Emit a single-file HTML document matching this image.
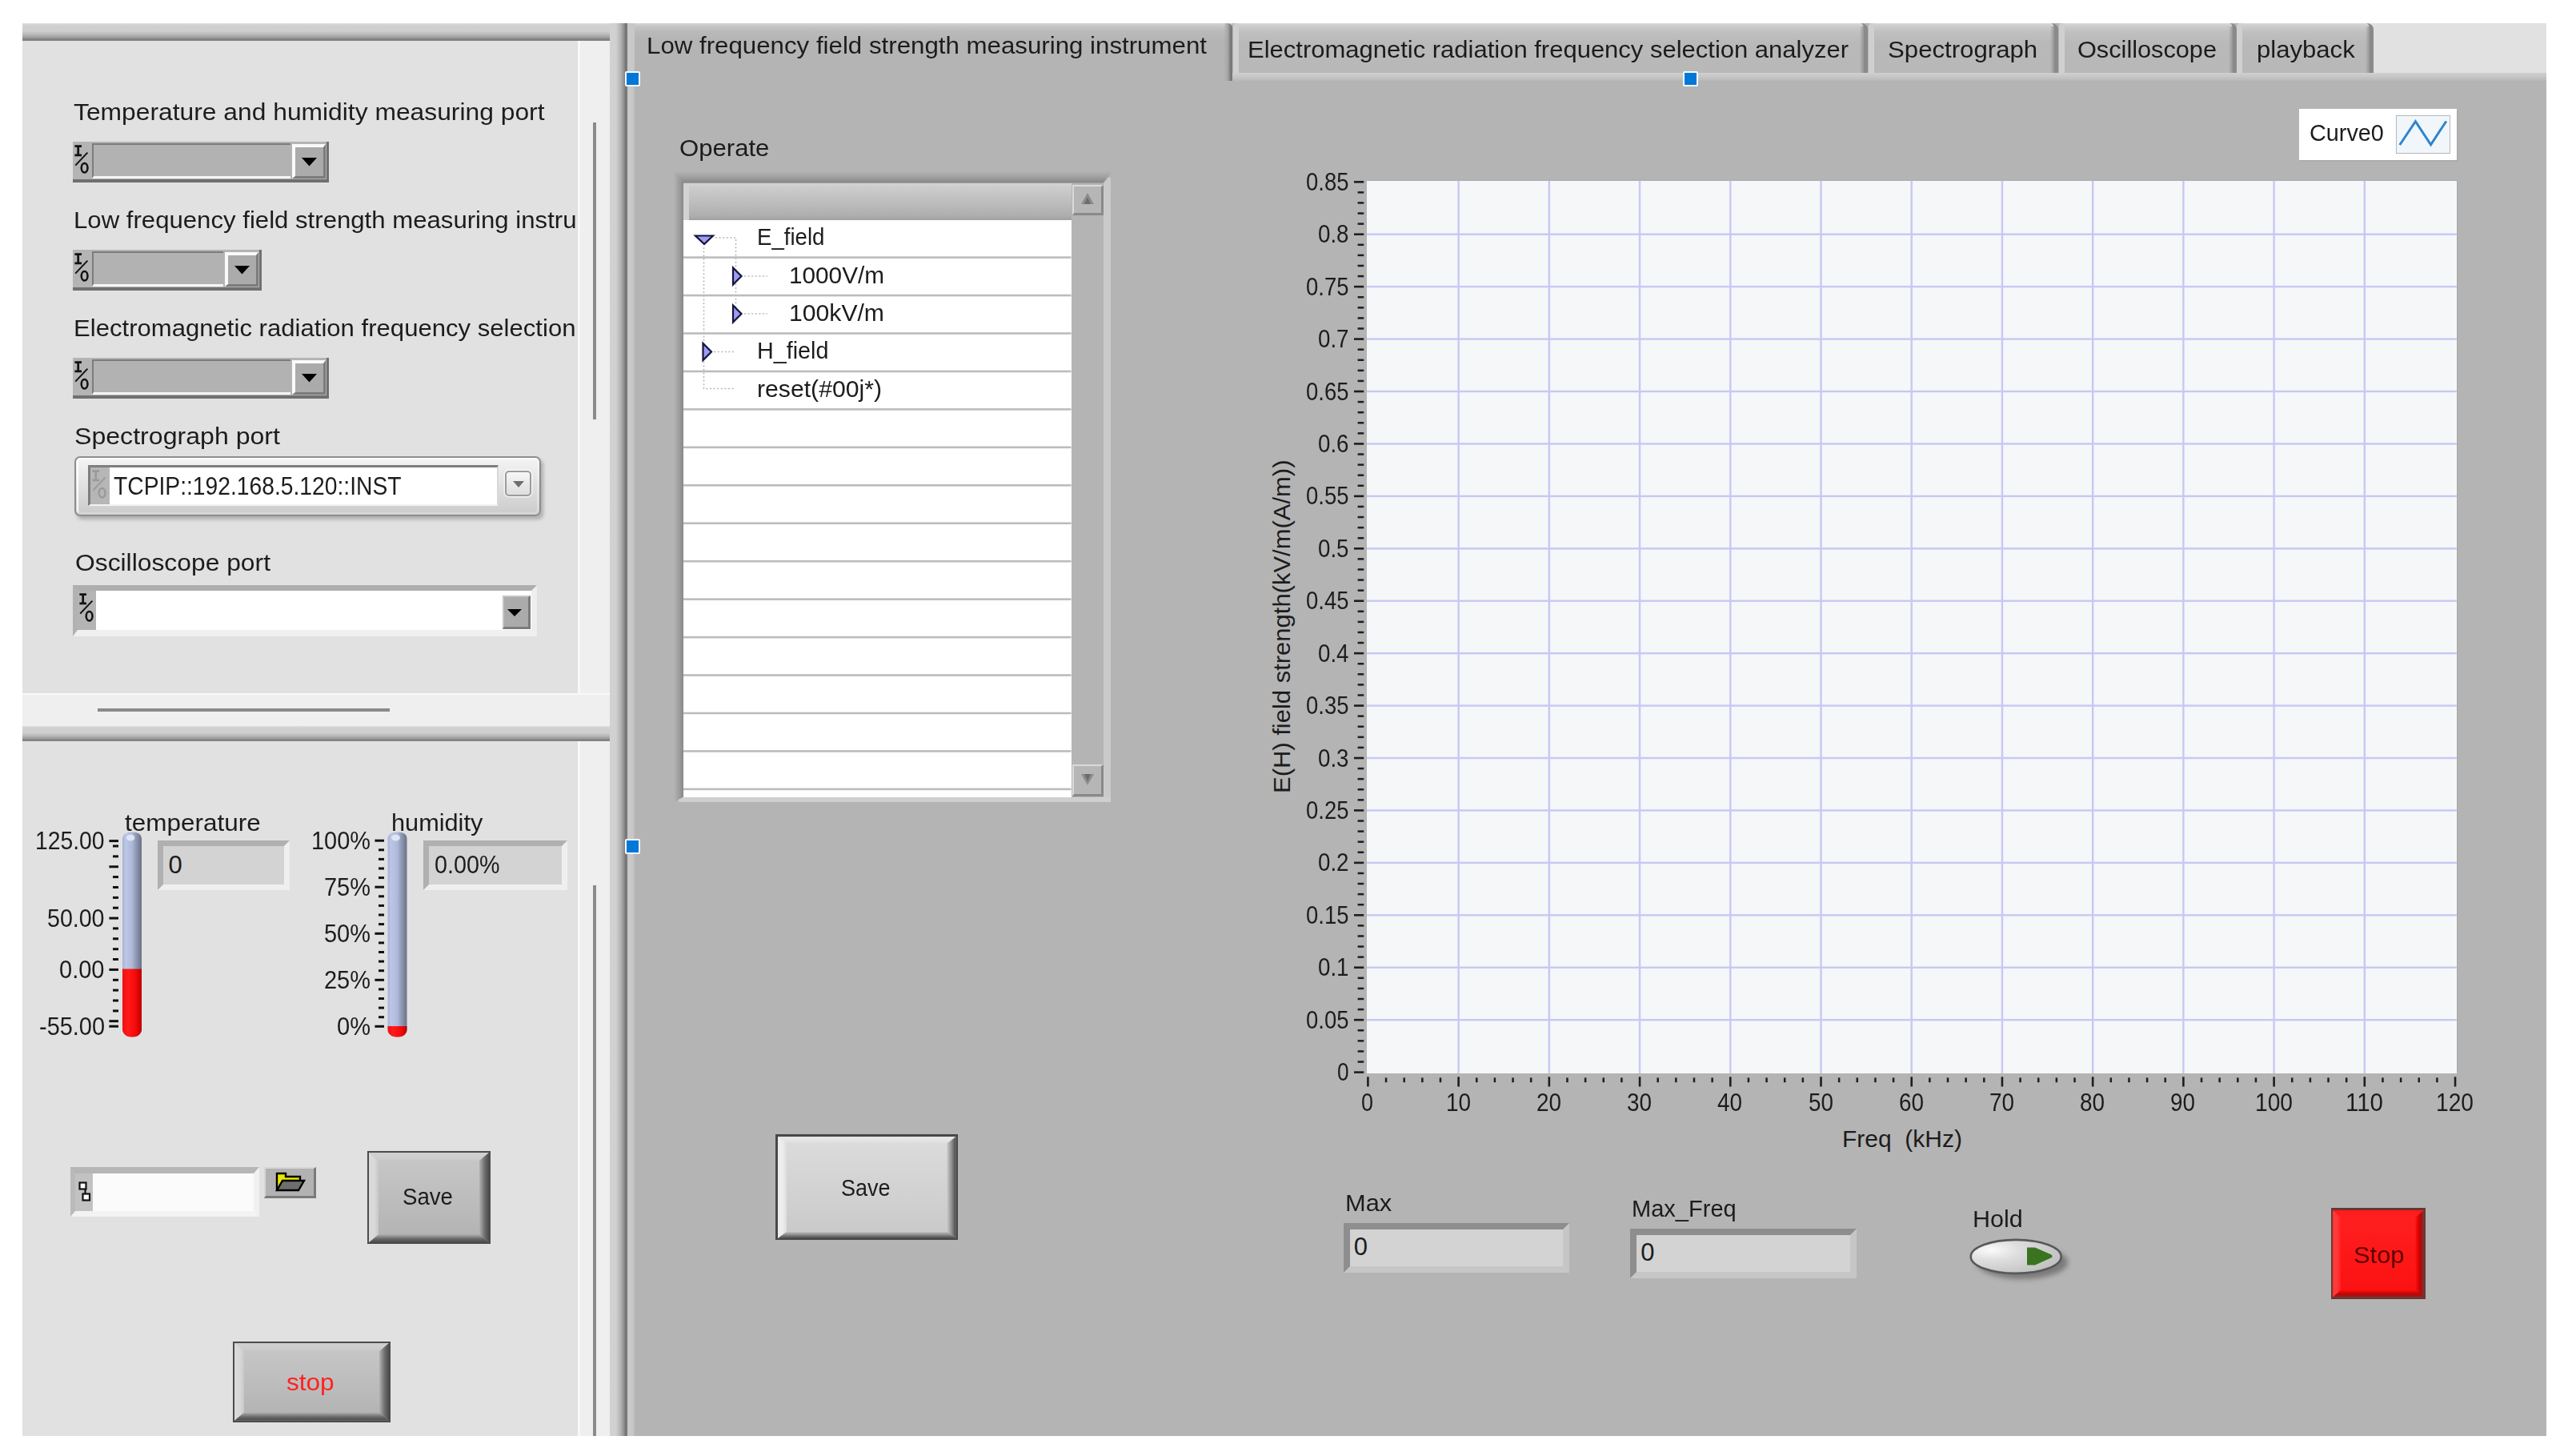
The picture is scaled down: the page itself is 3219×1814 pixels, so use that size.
<!DOCTYPE html>
<html lang="en">
<head>
<meta charset="utf-8">
<title>Field strength measuring front panel</title>
<style>
html,body{margin:0;padding:0;background:#fff;}
body{width:3219px;height:1814px;overflow:hidden;font-family:"Liberation Sans",sans-serif;}
#root{position:relative;width:3219px;height:1814px;overflow:hidden;background:#fff;}
#root div{position:absolute;box-sizing:border-box;}
#root svg{position:absolute;overflow:visible;}
.t{white-space:pre;line-height:1;transform-origin:0 0;}
.clip{overflow:hidden;}

</style>
</head>
<body>
<div id="root">
<div style="left:28px;top:29px;width:694px;height:1764.6px;background:#e1e1e1;"></div>
<div style="left:722px;top:29px;width:40px;height:1764.6px;background:#efefef;border-left:3px solid #f8f8f8;"></div>
<div style="left:28px;top:29px;width:734px;height:22px;background:linear-gradient(#dfdfdf 0,#d1d1d1 12%,#cecece 45%,#b6b6b6 66%,#9c9c9c 82%,#828282 90%,#828282 100%);"></div>
<div style="left:741px;top:153px;width:4px;height:371px;background:#8a8a8a;"></div>
<div style="left:741px;top:1106px;width:4px;height:687.6px;background:#8a8a8a;"></div>
<div style="left:28px;top:866px;width:734px;height:41px;background:#efefef;border-top:2px solid #f8f8f8;"></div>
<div style="left:122px;top:885px;width:365px;height:4px;background:#8a8a8a;"></div>
<div style="left:28px;top:907px;width:734px;height:19px;background:linear-gradient(#dfdfdf 0,#d1d1d1 12%,#cecece 45%,#b6b6b6 66%,#9c9c9c 82%,#828282 90%,#828282 100%);"></div>
<div style="left:762px;top:29px;width:22px;height:1764.6px;background:linear-gradient(90deg,#d2d2d2,#d0d0d0 35%,#b2b2b2 62%,#909090 80%,#787878 88%,#787878);"></div>
<div style="left:784px;top:29px;width:2398px;height:1764.6px;background:#b4b4b4;"></div>
<div style="left:784px;top:29px;width:10px;height:1764.6px;background:linear-gradient(90deg,#c8c8c8,#c8c8c8 65%,#b4b4b4);"></div>
<div class="clip" style="left:28px;top:51px;width:694px;height:815px;">
<div class="t" style="left:63.50px;top:73.80px;font-size:30px;color:#1c1c1c;transform:scaleX(1.0598);">Temperature and humidity measuring port</div>
<div class="t" style="left:63.50px;top:208.80px;font-size:30px;color:#1c1c1c;transform:scaleX(1.0383);">Low frequency field strength measuring instrument</div>
<div class="t" style="left:63.50px;top:343.81px;font-size:30px;color:#1c1c1c;transform:scaleX(1.0366);">Electromagnetic radiation frequency selection analyzer</div>
<div class="t" style="left:65.00px;top:479.11px;font-size:30px;color:#1c1c1c;transform:scaleX(1.0701);">Spectrograph port</div>
<div class="t" style="left:66.00px;top:636.61px;font-size:30px;color:#1c1c1c;transform:scaleX(1.0604);">Oscilloscope port</div>
</div>
<div style="left:91px;top:177px;width:320px;height:51px;background:#b4b4b4;border-right:3px solid #707070;border-bottom:4px solid #707070;"></div>
<svg width="24" height="44" viewBox="0 0 24 44" style="left:91px;top:177px"><g fill="none" stroke="#111"><path d="M2.4 5.6h8.6M6.7 5.6v11.2M2.4 16.8h8.6" stroke-width="2.7"/><path d="M18.4 13.6L3.2 29.6" stroke-width="2"/><ellipse cx="14.6" cy="32.8" rx="3.9" ry="5.7" stroke-width="2.5"/></g></svg>
<div style="left:115px;top:179px;width:248px;height:44px;background:#b2b2b2;border-top:2.5px solid #7c7c7c;border-left:2.5px solid #7c7c7c;border-bottom:3px solid #f4f4f4;"></div>
<div style="left:365px;top:180px;width:42px;height:43px;background:#ababab;border-top:4px solid #fafafa;border-left:4px solid #fafafa;border-right:3px solid #7c7c7c;border-bottom:3px solid #7c7c7c;"></div>
<svg width="20" height="11" viewBox="0 0 20 11" style="left:377px;top:197px"><path d="M0 0h19L9.5 10.5z" fill="#000"/></svg>
<div style="left:91px;top:312px;width:236px;height:51px;background:#b4b4b4;border-right:3px solid #707070;border-bottom:4px solid #707070;"></div>
<svg width="24" height="44" viewBox="0 0 24 44" style="left:91px;top:312px"><g fill="none" stroke="#111"><path d="M2.4 5.6h8.6M6.7 5.6v11.2M2.4 16.8h8.6" stroke-width="2.7"/><path d="M18.4 13.6L3.2 29.6" stroke-width="2"/><ellipse cx="14.6" cy="32.8" rx="3.9" ry="5.7" stroke-width="2.5"/></g></svg>
<div style="left:115px;top:314px;width:164px;height:44px;background:#b2b2b2;border-top:2.5px solid #7c7c7c;border-left:2.5px solid #7c7c7c;border-bottom:3px solid #f4f4f4;"></div>
<div style="left:281px;top:315px;width:42px;height:43px;background:#ababab;border-top:4px solid #fafafa;border-left:4px solid #fafafa;border-right:3px solid #7c7c7c;border-bottom:3px solid #7c7c7c;"></div>
<svg width="20" height="11" viewBox="0 0 20 11" style="left:293px;top:332px"><path d="M0 0h19L9.5 10.5z" fill="#000"/></svg>
<div style="left:91px;top:447px;width:320px;height:51px;background:#b4b4b4;border-right:3px solid #707070;border-bottom:4px solid #707070;"></div>
<svg width="24" height="44" viewBox="0 0 24 44" style="left:91px;top:447px"><g fill="none" stroke="#111"><path d="M2.4 5.6h8.6M6.7 5.6v11.2M2.4 16.8h8.6" stroke-width="2.7"/><path d="M18.4 13.6L3.2 29.6" stroke-width="2"/><ellipse cx="14.6" cy="32.8" rx="3.9" ry="5.7" stroke-width="2.5"/></g></svg>
<div style="left:115px;top:449px;width:248px;height:44px;background:#b2b2b2;border-top:2.5px solid #7c7c7c;border-left:2.5px solid #7c7c7c;border-bottom:3px solid #f4f4f4;"></div>
<div style="left:365px;top:450px;width:42px;height:43px;background:#ababab;border-top:4px solid #fafafa;border-left:4px solid #fafafa;border-right:3px solid #7c7c7c;border-bottom:3px solid #7c7c7c;"></div>
<svg width="20" height="11" viewBox="0 0 20 11" style="left:377px;top:467px"><path d="M0 0h19L9.5 10.5z" fill="#000"/></svg>
<div style="left:93px;top:569.5px;width:583px;height:75px;border-radius:7px;border:2.5px solid #8e8e8e;background:linear-gradient(#f4f4f4,#e2e2e2 45%,#cbcbcb);box-shadow:3px 4px 4px rgba(0,0,0,0.22);"></div>
<div style="left:96px;top:572px;width:577px;height:70px;border-radius:5px;border:2px solid rgba(255,255,255,0.85);border-bottom-color:rgba(255,255,255,0.2);border-right-color:rgba(255,255,255,0.3);"></div>
<div style="left:110px;top:580.5px;width:513px;height:51.5px;background:#fff;border-top:3px solid #7e7e7e;border-left:3px solid #7e7e7e;border-right:2px solid #d8d8d8;border-bottom:2px solid #f2f2f2;"></div>
<div style="left:113px;top:583.5px;width:24px;height:46.5px;background:#b6b6b6;"></div>
<svg width="24" height="44" viewBox="0 0 24 44" style="left:113px;top:583px"><g fill="none" stroke="#9a9a9a"><path d="M2.4 5.6h8.6M6.7 5.6v11.2M2.4 16.8h8.6" stroke-width="2.7"/><path d="M18.4 13.6L3.2 29.6" stroke-width="2"/><ellipse cx="14.6" cy="32.8" rx="3.9" ry="5.7" stroke-width="2.5"/></g></svg>
<div style="left:631px;top:587.5px;width:33px;height:32.5px;border-radius:5px;border:2px solid #9c9c9c;background:linear-gradient(#f6f6f6,#dedede);box-shadow:0 0 0 1.5px rgba(255,255,255,0.7);"></div>
<svg width="14" height="8" viewBox="0 0 14 8" style="left:640.5px;top:600.5px"><path d="M0 0h14L7 8z" fill="#6e6e6e"/></svg>
<div style="left:91px;top:731px;width:580px;height:63.5px;background:#fff;border-top:7px solid #aeaeae;border-left:6px solid #b2b2b2;border-right:7px solid #eeeeee;border-bottom:8px solid #f0f0f0;"></div>
<div style="left:97px;top:738px;width:23px;height:48.5px;background:#b4b4b4;"></div>
<svg width="24" height="44" viewBox="0 0 24 44" style="left:97px;top:737px"><g fill="none" stroke="#111"><path d="M2.4 5.6h8.6M6.7 5.6v11.2M2.4 16.8h8.6" stroke-width="2.7"/><path d="M18.4 13.6L3.2 29.6" stroke-width="2"/><ellipse cx="14.6" cy="32.8" rx="3.9" ry="5.7" stroke-width="2.5"/></g></svg>
<div style="left:627.5px;top:744px;width:35px;height:41.5px;background:#ababab;border-right:3px solid #7c7c7c;border-bottom:3px solid #7c7c7c;border-top:2px solid #c4c4c4;border-left:2px solid #c4c4c4;"></div>
<svg width="18" height="9" viewBox="0 0 18 9" style="left:634px;top:761px"><path d="M0 0h18L9 9z" fill="#000"/></svg>
<svg width="3219" height="1814" viewBox="0 0 3219 1814" style="left:0;top:0;pointer-events:none"><defs><linearGradient id="tg153" x1="0" x2="1" y1="0" y2="0"><stop offset="0" stop-color="#a9b3d2"/><stop offset="0.18" stop-color="#bcc6e6"/><stop offset="0.5" stop-color="#aeb8d8"/><stop offset="0.72" stop-color="#8e97b3"/><stop offset="1" stop-color="#6a7186"/></linearGradient><linearGradient id="tg153r" x1="0" x2="1" y1="0" y2="0"><stop offset="0" stop-color="#f01010"/><stop offset="0.3" stop-color="#ff1a1a"/><stop offset="0.7" stop-color="#f40808"/><stop offset="1" stop-color="#b80000"/></linearGradient><clipPath id="tg153c"><path d="M153 1048.5 C153 1042.0 157.8 1039.5 165.0 1039.5 C172.2 1039.5 177 1042.0 177 1048.5 V1285.7 C177 1291.7 171.72 1295.7 165.0 1295.7 C158.28 1295.7 153 1291.7 153 1285.7 Z"/></clipPath></defs><g clip-path="url(#tg153c)"><rect x="153" y="1039.5" width="24" height="256.20000000000005" fill="url(#tg153)"/><rect x="153" y="1210.5" width="24" height="85.20000000000005" fill="url(#tg153r)"/><ellipse cx="163.08" cy="1046.5" rx="5.28" ry="4" fill="#e4e9f8" opacity="0.9"/></g><rect x="136.4" y="1274.2" width="11.6" height="3" fill="#111"/><rect x="141.0" y="1261.4" width="7.0" height="3" fill="#111"/><rect x="141.0" y="1248.5" width="7.0" height="3" fill="#111"/><rect x="141.0" y="1235.6" width="7.0" height="3" fill="#111"/><rect x="141.0" y="1222.8" width="7.0" height="3" fill="#111"/><rect x="136.4" y="1209.9" width="11.6" height="3" fill="#111"/><rect x="141.0" y="1197.0" width="7.0" height="3" fill="#111"/><rect x="141.0" y="1184.2" width="7.0" height="3" fill="#111"/><rect x="141.0" y="1171.3" width="7.0" height="3" fill="#111"/><rect x="141.0" y="1158.4" width="7.0" height="3" fill="#111"/><rect x="136.4" y="1145.6" width="11.6" height="3" fill="#111"/><rect x="141.0" y="1132.7" width="7.0" height="3" fill="#111"/><rect x="141.0" y="1119.9" width="7.0" height="3" fill="#111"/><rect x="141.0" y="1107.0" width="7.0" height="3" fill="#111"/><rect x="141.0" y="1094.1" width="7.0" height="3" fill="#111"/><rect x="136.4" y="1081.3" width="11.6" height="3" fill="#111"/><rect x="141.0" y="1068.4" width="7.0" height="3" fill="#111"/><rect x="141.0" y="1055.5" width="7.0" height="3" fill="#111"/><rect x="136.4" y="1049.1" width="11.6" height="3" fill="#111"/><rect x="136.4" y="1280.7" width="11.6" height="3" fill="#111"/></svg>
<svg width="3219" height="1814" viewBox="0 0 3219 1814" style="left:0;top:0;pointer-events:none"><defs><linearGradient id="tg484" x1="0" x2="1" y1="0" y2="0"><stop offset="0" stop-color="#a9b3d2"/><stop offset="0.18" stop-color="#bcc6e6"/><stop offset="0.5" stop-color="#aeb8d8"/><stop offset="0.72" stop-color="#8e97b3"/><stop offset="1" stop-color="#6a7186"/></linearGradient><linearGradient id="tg484r" x1="0" x2="1" y1="0" y2="0"><stop offset="0" stop-color="#f01010"/><stop offset="0.3" stop-color="#ff1a1a"/><stop offset="0.7" stop-color="#f40808"/><stop offset="1" stop-color="#b80000"/></linearGradient><clipPath id="tg484c"><path d="M484.3 1048.5 C484.3 1042.0 489.18 1039.5 496.5 1039.5 C503.82 1039.5 508.7 1042.0 508.7 1048.5 V1285.7 C508.7 1291.7 503.332 1295.7 496.5 1295.7 C489.668 1295.7 484.3 1291.7 484.3 1285.7 Z"/></clipPath></defs><g clip-path="url(#tg484c)"><rect x="484.3" y="1039.5" width="24.4" height="256.20000000000005" fill="url(#tg484)"/><rect x="484.3" y="1282" width="24.4" height="13.700000000000045" fill="url(#tg484r)"/><ellipse cx="494.548" cy="1046.5" rx="5.367999999999999" ry="4" fill="#e4e9f8" opacity="0.9"/></g><rect x="468.4" y="1048.7" width="11.6" height="3" fill="#111"/><rect x="473.0" y="1060.3" width="7.0" height="3" fill="#111"/><rect x="473.0" y="1071.9" width="7.0" height="3" fill="#111"/><rect x="473.0" y="1083.5" width="7.0" height="3" fill="#111"/><rect x="473.0" y="1095.1" width="7.0" height="3" fill="#111"/><rect x="468.4" y="1106.7" width="11.6" height="3" fill="#111"/><rect x="473.0" y="1118.3" width="7.0" height="3" fill="#111"/><rect x="473.0" y="1129.9" width="7.0" height="3" fill="#111"/><rect x="473.0" y="1141.5" width="7.0" height="3" fill="#111"/><rect x="473.0" y="1153.1" width="7.0" height="3" fill="#111"/><rect x="468.4" y="1164.8" width="11.6" height="3" fill="#111"/><rect x="473.0" y="1176.4" width="7.0" height="3" fill="#111"/><rect x="473.0" y="1188.0" width="7.0" height="3" fill="#111"/><rect x="473.0" y="1199.6" width="7.0" height="3" fill="#111"/><rect x="473.0" y="1211.2" width="7.0" height="3" fill="#111"/><rect x="468.4" y="1222.8" width="11.6" height="3" fill="#111"/><rect x="473.0" y="1234.4" width="7.0" height="3" fill="#111"/><rect x="473.0" y="1246.0" width="7.0" height="3" fill="#111"/><rect x="473.0" y="1257.6" width="7.0" height="3" fill="#111"/><rect x="473.0" y="1269.2" width="7.0" height="3" fill="#111"/><rect x="468.4" y="1280.8" width="11.6" height="3" fill="#111"/></svg>
<div style="left:196.5px;top:1050px;width:165.5px;height:62px;background:#d3d3d3;border-style:solid;border-width:7px;border-color:#b0b0b0 #efefef #efefef #b0b0b0;"></div>
<div style="left:529px;top:1050px;width:179.5px;height:62px;background:#d3d3d3;border-style:solid;border-width:7px;border-color:#b0b0b0 #efefef #efefef #b0b0b0;"></div>
<div style="left:87.5px;top:1458px;width:236px;height:62px;background:#fbfbfb;border-style:solid;border-width:8px 7px 7px 6px;border-color:#b6b6b6 #f1f1f1 #f3f3f3 #bababa;"></div>
<div style="left:93.5px;top:1466px;width:22px;height:46.5px;background:#c2c2c2;"></div>
<svg width="16" height="26" viewBox="0 0 16 26" style="left:98px;top:1476px"><g fill="#fff" stroke="#111" stroke-width="2.2"><path d="M8.5 9v7" fill="none"/><rect x="1.5" y="1.5" width="8" height="8"/><rect x="5.5" y="15.5" width="8.5" height="8"/></g></svg>
<div style="left:330px;top:1458px;width:65px;height:39px;background:#b2b2b2;border-style:solid;border-width:2px 3px 3px 2px;border-color:#d6d6d6 #7a7a7a #7a7a7a #d6d6d6;"></div>
<svg width="38" height="26" viewBox="0 0 38 26" style="left:344px;top:1463px"><path d="M2 24V3h11v4h18v6" fill="#e8e800" stroke="#000" stroke-width="2.4" stroke-linejoin="miter"/><path d="M2 24L9 12h27L29 24z" fill="#6e6e6e" stroke="#000" stroke-width="2.4"/></svg>
<div style="left:459px;top:1438px;width:154px;height:116px;background:#4c4c4c;"></div>
<svg width="150" height="112" viewBox="0 0 150 112" style="left:461px;top:1440px"><defs><linearGradient id="bf459" x1="0" x2="0" y1="0" y2="1"><stop offset="0" stop-color="#c8c8c8"/><stop offset="1" stop-color="#b2b2b2"/></linearGradient><linearGradient id="bl459" x1="0" x2="1" y1="0" y2="0"><stop offset="0" stop-color="#d9d9d9"/><stop offset="0.55" stop-color="#d9d9d9"/><stop offset="1" stop-color="#c8c8c8"/></linearGradient><linearGradient id="br459" x1="0" x2="1" y1="0" y2="0"><stop offset="0" stop-color="#b2b2b2"/><stop offset="0.55" stop-color="#6e6e6e"/><stop offset="1" stop-color="#4c4c4c"/></linearGradient><linearGradient id="bb459" x1="0" x2="0" y1="0" y2="1"><stop offset="0" stop-color="#b2b2b2"/><stop offset="0.6" stop-color="#666666"/><stop offset="1" stop-color="#4c4c4c"/></linearGradient><linearGradient id="bt459" x1="0" x2="0" y1="0" y2="1"><stop offset="0" stop-color="#cfcfcf"/><stop offset="0.5" stop-color="#cfcfcf"/><stop offset="1" stop-color="#c8c8c8"/></linearGradient></defs><rect width="150" height="112" fill="url(#bf459)"/><path d="M0 0H150L138 10H12z" fill="url(#bt459)"/><path d="M0 112H150L138 102H12z" fill="url(#bb459)"/><path d="M150 0V112L138 102V10z" fill="url(#br459)"/><path d="M0 0V112L12 102V10z" fill="url(#bl459)"/></svg>
<div style="left:290.5px;top:1676px;width:197px;height:100.5px;background:#4c4c4c;"></div>
<svg width="193" height="96.5" viewBox="0 0 193 96.5" style="left:292.5px;top:1678px"><defs><linearGradient id="bf290" x1="0" x2="0" y1="0" y2="1"><stop offset="0" stop-color="#c8c8c8"/><stop offset="1" stop-color="#b2b2b2"/></linearGradient><linearGradient id="bl290" x1="0" x2="1" y1="0" y2="0"><stop offset="0" stop-color="#d9d9d9"/><stop offset="0.55" stop-color="#d9d9d9"/><stop offset="1" stop-color="#c8c8c8"/></linearGradient><linearGradient id="br290" x1="0" x2="1" y1="0" y2="0"><stop offset="0" stop-color="#b2b2b2"/><stop offset="0.55" stop-color="#6e6e6e"/><stop offset="1" stop-color="#4c4c4c"/></linearGradient><linearGradient id="bb290" x1="0" x2="0" y1="0" y2="1"><stop offset="0" stop-color="#b2b2b2"/><stop offset="0.6" stop-color="#666666"/><stop offset="1" stop-color="#4c4c4c"/></linearGradient><linearGradient id="bt290" x1="0" x2="0" y1="0" y2="1"><stop offset="0" stop-color="#cfcfcf"/><stop offset="0.5" stop-color="#cfcfcf"/><stop offset="1" stop-color="#c8c8c8"/></linearGradient></defs><rect width="193" height="96.5" fill="url(#bf290)"/><path d="M0 0H193L181 10H12z" fill="url(#bt290)"/><path d="M0 96.5H193L181 86.5H12z" fill="url(#bb290)"/><path d="M193 0V96.5L181 86.5V10z" fill="url(#br290)"/><path d="M0 0V96.5L12 86.5V10z" fill="url(#bl290)"/></svg>
<div style="left:2960px;top:29px;width:222px;height:62px;background:#e1e1e1;"></div>
<div style="left:1540px;top:91px;width:1642px;height:10px;background:linear-gradient(#d0d0d0,#c6c6c6 50%,#b8b8b8);"></div>
<div style="left:1541px;top:29px;width:793px;height:62px;background:linear-gradient(#dcdcdc 0,#cdcdcd 5%,#c0c0c0 18%,#b9b9b9 40%,#b8b8b8 100%);border-left:7px solid #d0d0d0;border-right:5px solid #8a8a8a;border-top-right-radius:9px 7px;border-top-left-radius:4px;"></div>
<div style="left:2324px;top:33px;width:5px;height:58px;background:linear-gradient(90deg,rgba(160,160,160,0),rgba(146,146,146,0.9));"></div>
<div style="left:2335px;top:29px;width:237px;height:62px;background:linear-gradient(#dcdcdc 0,#cdcdcd 5%,#c0c0c0 18%,#b9b9b9 40%,#b8b8b8 100%);border-left:7px solid #d0d0d0;border-right:5px solid #8a8a8a;border-top-right-radius:9px 7px;border-top-left-radius:4px;"></div>
<div style="left:2562px;top:33px;width:5px;height:58px;background:linear-gradient(90deg,rgba(160,160,160,0),rgba(146,146,146,0.9));"></div>
<div style="left:2573px;top:29px;width:221.5px;height:62px;background:linear-gradient(#dcdcdc 0,#cdcdcd 5%,#c0c0c0 18%,#b9b9b9 40%,#b8b8b8 100%);border-left:7px solid #d0d0d0;border-right:5px solid #8a8a8a;border-top-right-radius:9px 7px;border-top-left-radius:4px;"></div>
<div style="left:2784.5px;top:33px;width:5px;height:58px;background:linear-gradient(90deg,rgba(160,160,160,0),rgba(146,146,146,0.9));"></div>
<div style="left:2795px;top:29px;width:170.5px;height:62px;background:linear-gradient(#dcdcdc 0,#cdcdcd 5%,#c0c0c0 18%,#b9b9b9 40%,#b8b8b8 100%);border-left:7px solid #d0d0d0;border-right:5px solid #8a8a8a;border-top-right-radius:9px 7px;border-top-left-radius:4px;"></div>
<div style="left:2955.5px;top:33px;width:5px;height:58px;background:linear-gradient(90deg,rgba(160,160,160,0),rgba(146,146,146,0.9));"></div>
<div style="left:784px;top:29px;width:756px;height:72px;background:linear-gradient(#d6d6d6 0,#c4c4c4 6%,#b9b9b9 16%,#b4b4b4 30%);border-left:9px solid #c8c8c8;"></div>
<div style="left:1529px;top:29px;width:11px;height:72px;background:linear-gradient(90deg,rgba(180,180,180,0),#a8a8a8 45%,#747474 85%,#808080);border-top-right-radius:7px 5px;"></div>
<div style="left:781px;top:89px;width:19px;height:19px;background:#0078d7;border:2.5px solid #f4fbff;border-radius:2px;"></div>
<div style="left:2102.5px;top:89px;width:19px;height:19px;background:#0078d7;border:2.5px solid #f4fbff;border-radius:2px;"></div>
<div style="left:781px;top:1047.5px;width:19px;height:19px;background:#0078d7;border:2.5px solid #f4fbff;border-radius:2px;"></div>
<div style="left:842px;top:214px;width:546px;height:788px;background:#b4b4b4;"></div>
<div style="left:1379px;top:222px;width:9px;height:780px;background:#cacaca;"></div>
<div style="left:848px;top:995.5px;width:540px;height:6.5px;background:#cfcfcf;"></div>
<svg width="548" height="790" viewBox="842 214 548 790" style="left:842px;top:214px"><defs><linearGradient id="trt" x1="0" x2="0" y1="0" y2="1"><stop offset="0" stop-color="#b4b4b4"/><stop offset="0.45" stop-color="#a2a2a2"/><stop offset="1" stop-color="#868686"/></linearGradient><linearGradient id="trl" x1="0" x2="1" y1="0" y2="0"><stop offset="0" stop-color="#b4b4b4"/><stop offset="0.45" stop-color="#a2a2a2"/><stop offset="1" stop-color="#888888"/></linearGradient></defs><path d="M842 214H1390L1379 228.5H854z" fill="url(#trt)"/><path d="M842 214L854 228.5V995.5L842 1002z" fill="url(#trl)"/></svg>
<div style="left:854px;top:228.5px;width:484.5px;height:46.5px;background:linear-gradient(#d4d4d4 0,#cccccc 12%,#bebebe 50%,#aeaeae 88%,#a0a0a0 100%);border-left:7px solid #d2d2d2;"></div>
<div style="left:854px;top:275px;width:484.5px;height:720.5px;background:#fff;"></div>
<svg width="485" height="721" viewBox="0 0 485 721" style="left:854px;top:275px"><rect x="0" y="45.30" width="484.5" height="2.6" fill="#bcbcbc"/><rect x="0" y="92.75" width="484.5" height="2.6" fill="#bcbcbc"/><rect x="0" y="140.20" width="484.5" height="2.6" fill="#bcbcbc"/><rect x="0" y="187.65" width="484.5" height="2.6" fill="#bcbcbc"/><rect x="0" y="235.10" width="484.5" height="2.6" fill="#bcbcbc"/><rect x="0" y="282.55" width="484.5" height="2.6" fill="#bcbcbc"/><rect x="0" y="330.00" width="484.5" height="2.6" fill="#bcbcbc"/><rect x="0" y="377.45" width="484.5" height="2.6" fill="#bcbcbc"/><rect x="0" y="424.90" width="484.5" height="2.6" fill="#bcbcbc"/><rect x="0" y="472.35" width="484.5" height="2.6" fill="#bcbcbc"/><rect x="0" y="519.80" width="484.5" height="2.6" fill="#bcbcbc"/><rect x="0" y="567.25" width="484.5" height="2.6" fill="#bcbcbc"/><rect x="0" y="614.70" width="484.5" height="2.6" fill="#bcbcbc"/><rect x="0" y="662.15" width="484.5" height="2.6" fill="#bcbcbc"/><rect x="0" y="709.60" width="484.5" height="2.6" fill="#bcbcbc"/></svg>
<div style="left:1340px;top:230.5px;width:39px;height:38px;background:#b6b6b6;border-style:solid;border-width:2px 3px 3px 2px;border-color:#dadada #8a8a8a #8a8a8a #dadada;"></div>
<svg width="16" height="14" viewBox="0 0 16 14" style="left:1351px;top:240.5px"><path d="M8 0L16 14H0z" fill="#8c8c8c"/><path d="M8 5L12 14H4z" fill="#6c6c6c"/></svg>
<div style="left:1340px;top:955px;width:39px;height:40px;background:#b6b6b6;border-style:solid;border-width:2px 3px 3px 2px;border-color:#dadada #8a8a8a #8a8a8a #dadada;"></div>
<svg width="16" height="14" viewBox="0 0 16 14" style="left:1351px;top:967px"><path d="M0 0H16L8 14z" fill="#8c8c8c"/><path d="M4 0H12L8 9z" fill="#6c6c6c"/></svg>
<svg width="485" height="721" viewBox="854 275 485 721" style="left:854px;top:275px"><g stroke="#b8b8b8" stroke-width="1.6" stroke-dasharray="2 2.6" fill="none"><path d="M894 297H919.5V388"/><path d="M879.5 309V485.5H918"/><path d="M930 345H959"/><path d="M930 392H959"/><path d="M892 439.5H918"/></g><g fill="#9c9cf4" stroke="#14143c" stroke-width="2.2" stroke-linejoin="miter"><path d="M869 294.5H891L880 305z"/><path d="M916 334.5V355.5L926.5 345z"/><path d="M916 381.5V402.5L926.5 392z"/><path d="M878.5 429V450L889 439.5z"/></g></svg>
<div style="left:969px;top:1417px;width:227.5px;height:132px;background:#484848;"></div>
<svg width="222.5" height="127" viewBox="0 0 222.5 127" style="left:971.5px;top:1419.5px"><defs><linearGradient id="bf969" x1="0" x2="0" y1="0" y2="1"><stop offset="0" stop-color="#dcdcdc"/><stop offset="1" stop-color="#c9c9c9"/></linearGradient><linearGradient id="bl969" x1="0" x2="1" y1="0" y2="0"><stop offset="0" stop-color="#ededed"/><stop offset="0.55" stop-color="#ededed"/><stop offset="1" stop-color="#dcdcdc"/></linearGradient><linearGradient id="br969" x1="0" x2="1" y1="0" y2="0"><stop offset="0" stop-color="#c9c9c9"/><stop offset="0.55" stop-color="#8a8a8a"/><stop offset="1" stop-color="#484848"/></linearGradient><linearGradient id="bb969" x1="0" x2="0" y1="0" y2="1"><stop offset="0" stop-color="#c9c9c9"/><stop offset="0.6" stop-color="#7c7c7c"/><stop offset="1" stop-color="#484848"/></linearGradient><linearGradient id="bt969" x1="0" x2="0" y1="0" y2="1"><stop offset="0" stop-color="#e6e6e6"/><stop offset="0.5" stop-color="#e6e6e6"/><stop offset="1" stop-color="#dcdcdc"/></linearGradient></defs><rect width="222.5" height="127" fill="url(#bf969)"/><path d="M0 0H222.5L211.5 8.5H11z" fill="url(#bt969)"/><path d="M0 127H222.5L211.5 118.5H11z" fill="url(#bb969)"/><path d="M222.5 0V127L211.5 118.5V8.5z" fill="url(#br969)"/><path d="M0 0V127L11 118.5V8.5z" fill="url(#bl969)"/></svg>
<div style="left:1708px;top:225.9px;width:1361.8px;height:1115px;background:#f5f7f9;box-shadow:1.6px -1.4px 0 #abafb1;"></div>
<svg width="3219" height="1814" viewBox="0 0 3219 1814" style="left:0;top:0"><g fill="#c8c8f3"><rect x="1821.42" y="225.9" width="2.4" height="1115.0"/><rect x="1934.64" y="225.9" width="2.4" height="1115.0"/><rect x="2047.86" y="225.9" width="2.4" height="1115.0"/><rect x="2161.08" y="225.9" width="2.4" height="1115.0"/><rect x="2274.30" y="225.9" width="2.4" height="1115.0"/><rect x="2387.52" y="225.9" width="2.4" height="1115.0"/><rect x="2500.74" y="225.9" width="2.4" height="1115.0"/><rect x="2613.96" y="225.9" width="2.4" height="1115.0"/><rect x="2727.18" y="225.9" width="2.4" height="1115.0"/><rect x="2840.40" y="225.9" width="2.4" height="1115.0"/><rect x="2953.62" y="225.9" width="2.4" height="1115.0"/><rect x="1708.0" y="1272.97" width="1361.8" height="2.4"/><rect x="1708.0" y="1207.54" width="1361.8" height="2.4"/><rect x="1708.0" y="1142.11" width="1361.8" height="2.4"/><rect x="1708.0" y="1076.68" width="1361.8" height="2.4"/><rect x="1708.0" y="1011.25" width="1361.8" height="2.4"/><rect x="1708.0" y="945.82" width="1361.8" height="2.4"/><rect x="1708.0" y="880.39" width="1361.8" height="2.4"/><rect x="1708.0" y="814.96" width="1361.8" height="2.4"/><rect x="1708.0" y="749.53" width="1361.8" height="2.4"/><rect x="1708.0" y="684.10" width="1361.8" height="2.4"/><rect x="1708.0" y="618.67" width="1361.8" height="2.4"/><rect x="1708.0" y="553.24" width="1361.8" height="2.4"/><rect x="1708.0" y="487.81" width="1361.8" height="2.4"/><rect x="1708.0" y="422.38" width="1361.8" height="2.4"/><rect x="1708.0" y="356.95" width="1361.8" height="2.4"/><rect x="1708.0" y="291.52" width="1361.8" height="2.4"/></g><g fill="#1e1e1e"><rect x="1692" y="1338.30" width="12.2" height="2.6"/><rect x="1696.6" y="1325.26" width="7.6" height="2.5"/><rect x="1696.6" y="1312.18" width="7.6" height="2.5"/><rect x="1696.6" y="1299.09" width="7.6" height="2.5"/><rect x="1696.6" y="1286.01" width="7.6" height="2.5"/><rect x="1692" y="1272.87" width="12.2" height="2.6"/><rect x="1696.6" y="1259.83" width="7.6" height="2.5"/><rect x="1696.6" y="1246.75" width="7.6" height="2.5"/><rect x="1696.6" y="1233.66" width="7.6" height="2.5"/><rect x="1696.6" y="1220.58" width="7.6" height="2.5"/><rect x="1692" y="1207.44" width="12.2" height="2.6"/><rect x="1696.6" y="1194.40" width="7.6" height="2.5"/><rect x="1696.6" y="1181.32" width="7.6" height="2.5"/><rect x="1696.6" y="1168.23" width="7.6" height="2.5"/><rect x="1696.6" y="1155.15" width="7.6" height="2.5"/><rect x="1692" y="1142.01" width="12.2" height="2.6"/><rect x="1696.6" y="1128.97" width="7.6" height="2.5"/><rect x="1696.6" y="1115.89" width="7.6" height="2.5"/><rect x="1696.6" y="1102.80" width="7.6" height="2.5"/><rect x="1696.6" y="1089.72" width="7.6" height="2.5"/><rect x="1692" y="1076.58" width="12.2" height="2.6"/><rect x="1696.6" y="1063.54" width="7.6" height="2.5"/><rect x="1696.6" y="1050.46" width="7.6" height="2.5"/><rect x="1696.6" y="1037.37" width="7.6" height="2.5"/><rect x="1696.6" y="1024.29" width="7.6" height="2.5"/><rect x="1692" y="1011.15" width="12.2" height="2.6"/><rect x="1696.6" y="998.11" width="7.6" height="2.5"/><rect x="1696.6" y="985.03" width="7.6" height="2.5"/><rect x="1696.6" y="971.94" width="7.6" height="2.5"/><rect x="1696.6" y="958.86" width="7.6" height="2.5"/><rect x="1692" y="945.72" width="12.2" height="2.6"/><rect x="1696.6" y="932.68" width="7.6" height="2.5"/><rect x="1696.6" y="919.60" width="7.6" height="2.5"/><rect x="1696.6" y="906.51" width="7.6" height="2.5"/><rect x="1696.6" y="893.43" width="7.6" height="2.5"/><rect x="1692" y="880.29" width="12.2" height="2.6"/><rect x="1696.6" y="867.25" width="7.6" height="2.5"/><rect x="1696.6" y="854.17" width="7.6" height="2.5"/><rect x="1696.6" y="841.08" width="7.6" height="2.5"/><rect x="1696.6" y="828.00" width="7.6" height="2.5"/><rect x="1692" y="814.86" width="12.2" height="2.6"/><rect x="1696.6" y="801.82" width="7.6" height="2.5"/><rect x="1696.6" y="788.74" width="7.6" height="2.5"/><rect x="1696.6" y="775.65" width="7.6" height="2.5"/><rect x="1696.6" y="762.57" width="7.6" height="2.5"/><rect x="1692" y="749.43" width="12.2" height="2.6"/><rect x="1696.6" y="736.39" width="7.6" height="2.5"/><rect x="1696.6" y="723.31" width="7.6" height="2.5"/><rect x="1696.6" y="710.22" width="7.6" height="2.5"/><rect x="1696.6" y="697.14" width="7.6" height="2.5"/><rect x="1692" y="684.00" width="12.2" height="2.6"/><rect x="1696.6" y="670.96" width="7.6" height="2.5"/><rect x="1696.6" y="657.88" width="7.6" height="2.5"/><rect x="1696.6" y="644.79" width="7.6" height="2.5"/><rect x="1696.6" y="631.71" width="7.6" height="2.5"/><rect x="1692" y="618.57" width="12.2" height="2.6"/><rect x="1696.6" y="605.53" width="7.6" height="2.5"/><rect x="1696.6" y="592.45" width="7.6" height="2.5"/><rect x="1696.6" y="579.36" width="7.6" height="2.5"/><rect x="1696.6" y="566.28" width="7.6" height="2.5"/><rect x="1692" y="553.14" width="12.2" height="2.6"/><rect x="1696.6" y="540.10" width="7.6" height="2.5"/><rect x="1696.6" y="527.02" width="7.6" height="2.5"/><rect x="1696.6" y="513.93" width="7.6" height="2.5"/><rect x="1696.6" y="500.85" width="7.6" height="2.5"/><rect x="1692" y="487.71" width="12.2" height="2.6"/><rect x="1696.6" y="474.67" width="7.6" height="2.5"/><rect x="1696.6" y="461.59" width="7.6" height="2.5"/><rect x="1696.6" y="448.50" width="7.6" height="2.5"/><rect x="1696.6" y="435.42" width="7.6" height="2.5"/><rect x="1692" y="422.28" width="12.2" height="2.6"/><rect x="1696.6" y="409.24" width="7.6" height="2.5"/><rect x="1696.6" y="396.16" width="7.6" height="2.5"/><rect x="1696.6" y="383.07" width="7.6" height="2.5"/><rect x="1696.6" y="369.99" width="7.6" height="2.5"/><rect x="1692" y="356.85" width="12.2" height="2.6"/><rect x="1696.6" y="343.81" width="7.6" height="2.5"/><rect x="1696.6" y="330.73" width="7.6" height="2.5"/><rect x="1696.6" y="317.64" width="7.6" height="2.5"/><rect x="1696.6" y="304.56" width="7.6" height="2.5"/><rect x="1692" y="291.42" width="12.2" height="2.6"/><rect x="1696.6" y="278.38" width="7.6" height="2.5"/><rect x="1696.6" y="265.30" width="7.6" height="2.5"/><rect x="1696.6" y="252.21" width="7.6" height="2.5"/><rect x="1696.6" y="239.13" width="7.6" height="2.5"/><rect x="1692" y="225.99" width="12.2" height="2.6"/><rect x="1708.10" y="1345.3" width="2.6" height="12.2"/><rect x="1730.79" y="1346.4" width="2.5" height="5.8"/><rect x="1753.44" y="1346.4" width="2.5" height="5.8"/><rect x="1776.08" y="1346.4" width="2.5" height="5.8"/><rect x="1798.73" y="1346.4" width="2.5" height="5.8"/><rect x="1821.32" y="1345.3" width="2.6" height="12.2"/><rect x="1844.01" y="1346.4" width="2.5" height="5.8"/><rect x="1866.66" y="1346.4" width="2.5" height="5.8"/><rect x="1889.30" y="1346.4" width="2.5" height="5.8"/><rect x="1911.95" y="1346.4" width="2.5" height="5.8"/><rect x="1934.54" y="1345.3" width="2.6" height="12.2"/><rect x="1957.23" y="1346.4" width="2.5" height="5.8"/><rect x="1979.88" y="1346.4" width="2.5" height="5.8"/><rect x="2002.52" y="1346.4" width="2.5" height="5.8"/><rect x="2025.17" y="1346.4" width="2.5" height="5.8"/><rect x="2047.76" y="1345.3" width="2.6" height="12.2"/><rect x="2070.45" y="1346.4" width="2.5" height="5.8"/><rect x="2093.10" y="1346.4" width="2.5" height="5.8"/><rect x="2115.74" y="1346.4" width="2.5" height="5.8"/><rect x="2138.39" y="1346.4" width="2.5" height="5.8"/><rect x="2160.98" y="1345.3" width="2.6" height="12.2"/><rect x="2183.67" y="1346.4" width="2.5" height="5.8"/><rect x="2206.32" y="1346.4" width="2.5" height="5.8"/><rect x="2228.96" y="1346.4" width="2.5" height="5.8"/><rect x="2251.61" y="1346.4" width="2.5" height="5.8"/><rect x="2274.20" y="1345.3" width="2.6" height="12.2"/><rect x="2296.89" y="1346.4" width="2.5" height="5.8"/><rect x="2319.54" y="1346.4" width="2.5" height="5.8"/><rect x="2342.18" y="1346.4" width="2.5" height="5.8"/><rect x="2364.83" y="1346.4" width="2.5" height="5.8"/><rect x="2387.42" y="1345.3" width="2.6" height="12.2"/><rect x="2410.11" y="1346.4" width="2.5" height="5.8"/><rect x="2432.76" y="1346.4" width="2.5" height="5.8"/><rect x="2455.40" y="1346.4" width="2.5" height="5.8"/><rect x="2478.05" y="1346.4" width="2.5" height="5.8"/><rect x="2500.64" y="1345.3" width="2.6" height="12.2"/><rect x="2523.33" y="1346.4" width="2.5" height="5.8"/><rect x="2545.98" y="1346.4" width="2.5" height="5.8"/><rect x="2568.62" y="1346.4" width="2.5" height="5.8"/><rect x="2591.27" y="1346.4" width="2.5" height="5.8"/><rect x="2613.86" y="1345.3" width="2.6" height="12.2"/><rect x="2636.55" y="1346.4" width="2.5" height="5.8"/><rect x="2659.20" y="1346.4" width="2.5" height="5.8"/><rect x="2681.84" y="1346.4" width="2.5" height="5.8"/><rect x="2704.49" y="1346.4" width="2.5" height="5.8"/><rect x="2727.08" y="1345.3" width="2.6" height="12.2"/><rect x="2749.77" y="1346.4" width="2.5" height="5.8"/><rect x="2772.42" y="1346.4" width="2.5" height="5.8"/><rect x="2795.06" y="1346.4" width="2.5" height="5.8"/><rect x="2817.71" y="1346.4" width="2.5" height="5.8"/><rect x="2840.30" y="1345.3" width="2.6" height="12.2"/><rect x="2862.99" y="1346.4" width="2.5" height="5.8"/><rect x="2885.64" y="1346.4" width="2.5" height="5.8"/><rect x="2908.28" y="1346.4" width="2.5" height="5.8"/><rect x="2930.93" y="1346.4" width="2.5" height="5.8"/><rect x="2953.52" y="1345.3" width="2.6" height="12.2"/><rect x="2976.21" y="1346.4" width="2.5" height="5.8"/><rect x="2998.86" y="1346.4" width="2.5" height="5.8"/><rect x="3021.50" y="1346.4" width="2.5" height="5.8"/><rect x="3044.15" y="1346.4" width="2.5" height="5.8"/><rect x="3066.74" y="1345.3" width="2.6" height="12.2"/></g></svg>
<div style="left:2872.5px;top:135.7px;width:197px;height:64.6px;background:#fff;box-shadow:1.6px 1.6px 0 #a9a9a9;"></div>
<div style="left:2994px;top:143.8px;width:68.2px;height:48.6px;background:#f0f6fa;border:1.6px solid #b4b8bc;"></div>
<svg width="68" height="49" viewBox="2994 143.8 68.2 48.6" style="left:2994px;top:143.8px"><path d="M2998.8 180.6L3018.5 151.3L3037.7 180.4L3057 151" fill="none" stroke="#2f84cc" stroke-width="3" stroke-linejoin="miter"/></svg>
<div style="left:1679px;top:1527.5px;width:282px;height:62px;background:#d3d3d3;border-style:solid;border-width:8px;border-color:#8e8e8e #c6c6c6 #c6c6c6 #8e8e8e;"></div>
<div style="left:2037px;top:1534.7px;width:283px;height:62px;background:#d3d3d3;border-style:solid;border-width:8px;border-color:#8e8e8e #c6c6c6 #c6c6c6 #8e8e8e;"></div>
<svg width="150" height="70" viewBox="2450 1540 150 70" style="left:2450px;top:1540px"><defs><radialGradient id="hg" cx="0.22" cy="0.3" r="0.9"><stop offset="0" stop-color="#fbfbfb"/><stop offset="0.35" stop-color="#dedede"/><stop offset="1" stop-color="#bcbcbc"/></radialGradient><filter id="hb" x="-20%" y="-30%" width="140%" height="160%"><feGaussianBlur stdDeviation="3.2"/></filter></defs><ellipse cx="2527" cy="1577" rx="57" ry="21" fill="#4c4c4c" opacity="0.55" filter="url(#hb)"/><ellipse cx="2519.2" cy="1569.9" rx="56.5" ry="21" fill="url(#hg)" stroke="#585858" stroke-width="2.6"/><path d="M2533 1558.5H2543L2563.5 1567.5Q2565.5 1569.4 2563.5 1571.2L2543 1580.4H2533z" fill="#3a7420"/></svg>
<div style="left:2912.5px;top:1509px;width:118.5px;height:113.5px;background:#6a3632;"></div>
<svg width="113.5" height="108.5" viewBox="0 0 113.5 108.5" style="left:2915px;top:1511.5px"><defs><linearGradient id="bf2912" x1="0" x2="0" y1="0" y2="1"><stop offset="0" stop-color="#ff2020"/><stop offset="1" stop-color="#fb1010"/></linearGradient><linearGradient id="bl2912" x1="0" x2="1" y1="0" y2="0"><stop offset="0" stop-color="#ff3838"/><stop offset="0.55" stop-color="#ff3838"/><stop offset="1" stop-color="#ff2020"/></linearGradient><linearGradient id="br2912" x1="0" x2="1" y1="0" y2="0"><stop offset="0" stop-color="#fb1010"/><stop offset="0.55" stop-color="#c80000"/><stop offset="1" stop-color="#6a3632"/></linearGradient><linearGradient id="bb2912" x1="0" x2="0" y1="0" y2="1"><stop offset="0" stop-color="#fb1010"/><stop offset="0.6" stop-color="#c40000"/><stop offset="1" stop-color="#6a3632"/></linearGradient><linearGradient id="bt2912" x1="0" x2="0" y1="0" y2="1"><stop offset="0" stop-color="#ff1c1c"/><stop offset="0.5" stop-color="#ff1c1c"/><stop offset="1" stop-color="#ff2020"/></linearGradient></defs><rect width="113.5" height="108.5" fill="url(#bf2912)"/><path d="M0 0H113.5L103.5 9H10z" fill="url(#bt2912)"/><path d="M0 108.5H113.5L103.5 99.5H10z" fill="url(#bb2912)"/><path d="M113.5 0V108.5L103.5 99.5V9z" fill="url(#br2912)"/><path d="M0 0V108.5L10 99.5V9z" fill="url(#bl2912)"/></svg>
<div class="t" style="left:141.50px;top:591.56px;font-size:31px;color:#1c1c1c;transform:scaleX(0.9110);">TCPIP::192.168.5.120::INST</div>
<div class="t" style="left:44.00px;top:1035.16px;font-size:31px;color:#1c1c1c;transform:scaleX(0.9122);">125.00</div>
<div class="t" style="left:59.00px;top:1131.64px;font-size:31px;color:#1c1c1c;transform:scaleX(0.9217);">50.00</div>
<div class="t" style="left:74.00px;top:1195.96px;font-size:31px;color:#1c1c1c;transform:scaleX(0.9363);">0.00</div>
<div class="t" style="left:48.50px;top:1266.71px;font-size:31px;color:#1c1c1c;transform:scaleX(0.9328);">-55.00</div>
<div class="t" style="left:389.30px;top:1034.76px;font-size:31px;color:#1c1c1c;transform:scaleX(0.9332);">100%</div>
<div class="t" style="left:405.30px;top:1092.78px;font-size:31px;color:#1c1c1c;transform:scaleX(0.9348);">75%</div>
<div class="t" style="left:405.30px;top:1150.81px;font-size:31px;color:#1c1c1c;transform:scaleX(0.9348);">50%</div>
<div class="t" style="left:405.30px;top:1208.83px;font-size:31px;color:#1c1c1c;transform:scaleX(0.9348);">25%</div>
<div class="t" style="left:421.30px;top:1266.86px;font-size:31px;color:#1c1c1c;transform:scaleX(0.9372);">0%</div>
<div class="t" style="left:156.00px;top:1012.81px;font-size:30px;color:#1c1c1c;transform:scaleX(1.0491);">temperature</div>
<div class="t" style="left:488.50px;top:1012.81px;font-size:30px;color:#1c1c1c;transform:scaleX(1.0231);">humidity</div>
<div class="t" style="left:210.40px;top:1065.16px;font-size:31px;color:#1c1c1c;">0</div>
<div class="t" style="left:543.00px;top:1065.16px;font-size:31px;color:#1c1c1c;transform:scaleX(0.9271);">0.00%</div>
<div class="t" style="left:502.70px;top:1480.40px;font-size:30px;color:#1c1c1c;transform:scaleX(0.9212);">Save</div>
<div class="t" style="left:357.60px;top:1711.61px;font-size:30px;color:#ff2222;transform:scaleX(1.0526);">stop</div>
<div class="t" style="left:1559.40px;top:47.20px;font-size:30px;color:#1c1c1c;transform:scaleX(1.0329);">Electromagnetic radiation frequency selection analyzer</div>
<div class="t" style="left:2359.40px;top:47.20px;font-size:30px;color:#1c1c1c;transform:scaleX(1.0393);">Spectrograph</div>
<div class="t" style="left:2596.00px;top:47.20px;font-size:30px;color:#1c1c1c;transform:scaleX(1.0231);">Oscilloscope</div>
<div class="t" style="left:2819.50px;top:47.20px;font-size:30px;color:#1c1c1c;transform:scaleX(1.0363);">playback</div>
<div class="t" style="left:808.00px;top:42.20px;font-size:30px;color:#1c1c1c;transform:scaleX(1.0416);">Low frequency field strength measuring instrument</div>
<div class="t" style="left:848.60px;top:169.80px;font-size:30px;color:#1c1c1c;transform:scaleX(1.0368);">Operate</div>
<div class="t" style="left:946.40px;top:281.11px;font-size:30px;color:#1c1c1c;transform:scaleX(0.9211);">E_field</div>
<div class="t" style="left:985.50px;top:328.61px;font-size:30px;color:#1c1c1c;transform:scaleX(0.9910);">1000V/m</div>
<div class="t" style="left:985.50px;top:375.91px;font-size:30px;color:#1c1c1c;transform:scaleX(1.0051);">100kV/m</div>
<div class="t" style="left:946.40px;top:423.11px;font-size:30px;color:#1c1c1c;transform:scaleX(0.9583);">H_field</div>
<div class="t" style="left:946.40px;top:471.11px;font-size:30px;color:#1c1c1c;transform:scaleX(1.0059);">reset(#00j*)</div>
<div class="t" style="left:1050.60px;top:1468.90px;font-size:30px;color:#1c1c1c;transform:scaleX(0.8992);">Save</div>
<div class="t" style="left:1670.80px;top:1324.16px;font-size:31px;color:#1c1c1c;transform:scaleX(0.8464);">0</div>
<div class="t" style="left:1632.00px;top:1258.73px;font-size:31px;color:#1c1c1c;transform:scaleX(0.8849);">0.05</div>
<div class="t" style="left:1646.90px;top:1193.30px;font-size:31px;color:#1c1c1c;transform:scaleX(0.8931);">0.1</div>
<div class="t" style="left:1632.00px;top:1127.87px;font-size:31px;color:#1c1c1c;transform:scaleX(0.8849);">0.15</div>
<div class="t" style="left:1646.90px;top:1062.44px;font-size:31px;color:#1c1c1c;transform:scaleX(0.8931);">0.2</div>
<div class="t" style="left:1632.00px;top:997.01px;font-size:31px;color:#1c1c1c;transform:scaleX(0.8849);">0.25</div>
<div class="t" style="left:1646.90px;top:931.58px;font-size:31px;color:#1c1c1c;transform:scaleX(0.8931);">0.3</div>
<div class="t" style="left:1632.00px;top:866.15px;font-size:31px;color:#1c1c1c;transform:scaleX(0.8849);">0.35</div>
<div class="t" style="left:1646.90px;top:800.72px;font-size:31px;color:#1c1c1c;transform:scaleX(0.8931);">0.4</div>
<div class="t" style="left:1632.00px;top:735.29px;font-size:31px;color:#1c1c1c;transform:scaleX(0.8849);">0.45</div>
<div class="t" style="left:1646.90px;top:669.86px;font-size:31px;color:#1c1c1c;transform:scaleX(0.8931);">0.5</div>
<div class="t" style="left:1632.00px;top:604.43px;font-size:31px;color:#1c1c1c;transform:scaleX(0.8849);">0.55</div>
<div class="t" style="left:1646.90px;top:539.00px;font-size:31px;color:#1c1c1c;transform:scaleX(0.8931);">0.6</div>
<div class="t" style="left:1632.00px;top:473.57px;font-size:31px;color:#1c1c1c;transform:scaleX(0.8849);">0.65</div>
<div class="t" style="left:1646.90px;top:408.14px;font-size:31px;color:#1c1c1c;transform:scaleX(0.8931);">0.7</div>
<div class="t" style="left:1632.00px;top:342.71px;font-size:31px;color:#1c1c1c;transform:scaleX(0.8849);">0.75</div>
<div class="t" style="left:1646.90px;top:277.28px;font-size:31px;color:#1c1c1c;transform:scaleX(0.8931);">0.8</div>
<div class="t" style="left:1632.00px;top:211.85px;font-size:31px;color:#1c1c1c;transform:scaleX(0.8849);">0.85</div>
<div class="t" style="left:1701.40px;top:1362.36px;font-size:31px;color:#1c1c1c;transform:scaleX(0.8696);">0</div>
<div class="t" style="left:1806.62px;top:1362.36px;font-size:31px;color:#1c1c1c;transform:scaleX(0.8990);">10</div>
<div class="t" style="left:1919.84px;top:1362.36px;font-size:31px;color:#1c1c1c;transform:scaleX(0.8990);">20</div>
<div class="t" style="left:2033.06px;top:1362.36px;font-size:31px;color:#1c1c1c;transform:scaleX(0.8990);">30</div>
<div class="t" style="left:2146.28px;top:1362.36px;font-size:31px;color:#1c1c1c;transform:scaleX(0.8990);">40</div>
<div class="t" style="left:2259.50px;top:1362.36px;font-size:31px;color:#1c1c1c;transform:scaleX(0.8990);">50</div>
<div class="t" style="left:2372.72px;top:1362.36px;font-size:31px;color:#1c1c1c;transform:scaleX(0.8990);">60</div>
<div class="t" style="left:2485.94px;top:1362.36px;font-size:31px;color:#1c1c1c;transform:scaleX(0.8990);">70</div>
<div class="t" style="left:2599.16px;top:1362.36px;font-size:31px;color:#1c1c1c;transform:scaleX(0.8990);">80</div>
<div class="t" style="left:2712.38px;top:1362.36px;font-size:31px;color:#1c1c1c;transform:scaleX(0.8990);">90</div>
<div class="t" style="left:2817.60px;top:1362.36px;font-size:31px;color:#1c1c1c;transform:scaleX(0.9085);">100</div>
<div class="t" style="left:2930.82px;top:1362.36px;font-size:31px;color:#1c1c1c;transform:scaleX(0.9510);">110</div>
<div class="t" style="left:3044.04px;top:1362.36px;font-size:31px;color:#1c1c1c;transform:scaleX(0.9085);">120</div>
<div class="t" style="left:2302.00px;top:1407.61px;font-size:30px;color:#1c1c1c;">Freq  (kHz)</div>
<div class="t" style="left:1586.50px;top:991.00px;font-size:30px;color:#1c1c1c;transform:rotate(-90deg) scaleX(1.0325);">E(H) field strength(kV/m(A/m))</div>
<div class="t" style="left:2886.00px;top:151.41px;font-size:30px;color:#1c1c1c;transform:scaleX(0.9595);">Curve0</div>
<div class="t" style="left:1681.00px;top:1488.20px;font-size:30px;color:#1c1c1c;transform:scaleX(1.0267);">Max</div>
<div class="t" style="left:1691.70px;top:1541.96px;font-size:31px;color:#1c1c1c;">0</div>
<div class="t" style="left:2038.80px;top:1494.81px;font-size:30px;color:#1c1c1c;transform:scaleX(0.9678);">Max_Freq</div>
<div class="t" style="left:2050.20px;top:1548.76px;font-size:31px;color:#1c1c1c;">0</div>
<div class="t" style="left:2464.60px;top:1507.61px;font-size:30px;color:#1c1c1c;transform:scaleX(1.0162);">Hold</div>
<div class="t" style="left:2940.50px;top:1553.40px;font-size:30px;color:#5e0404;transform:scaleX(1.0289);">Stop</div>
</div>
</body>
</html>
